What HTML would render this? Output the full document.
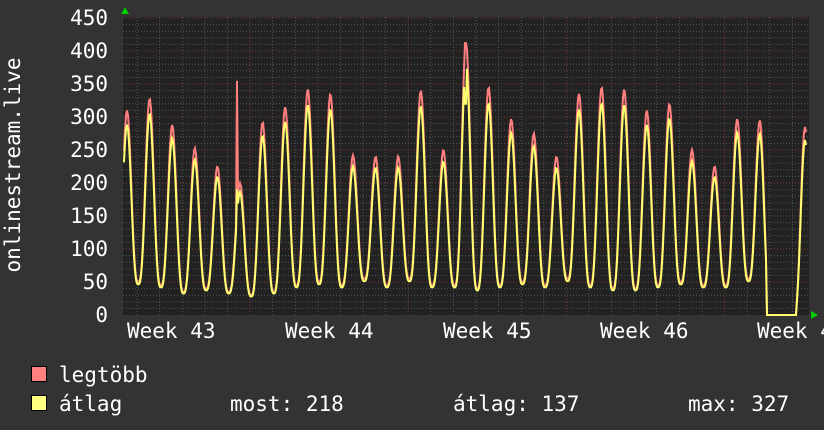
<!DOCTYPE html>
<html><head><meta charset="utf-8"><style>
html,body{margin:0;padding:0;background:#333;}
svg{display:block}
text{font-family:"DejaVu Sans Mono","Liberation Mono",monospace;fill:#fff;font-size:21px}
</style></head><body>
<svg id="s" width="824" height="430" xmlns="http://www.w3.org/2000/svg">
<rect width="824" height="430" fill="#333"/>
<rect x="123" y="17" width="686" height="298" fill="#222"/>
<g id="grid"></g>
<polyline id="red" fill="none" stroke="#ff7f7f" stroke-width="2" points=""/>
<polyline id="yel" fill="none" stroke="#ffff70" stroke-width="2" points=""/>
<polygon points="121,14 129,14 125,7" fill="#0c0"/>
<polygon points="811,311 811,319 818,315" fill="#0c0"/>
<g text-anchor="end">
<text x="108" y="25">450</text><text x="108" y="58">400</text><text x="108" y="91">350</text>
<text x="108" y="124">300</text><text x="108" y="157">250</text><text x="108" y="190">200</text>
<text x="108" y="223">150</text><text x="108" y="256">100</text><text x="108" y="289">50</text>
<text x="108" y="322">0</text>
</g>
<text transform="translate(20,165) rotate(-90)" text-anchor="middle">onlinestream.live</text>
<text x="127" y="338">Week 43</text><text x="285" y="338">Week 44</text><text x="443" y="338">Week 45</text>
<text x="600" y="338">Week 46</text><text x="757" y="338">Week 4</text>
<rect x="31.5" y="366.5" width="15" height="15" fill="#ff8080" stroke="#000"/>
<rect x="31.5" y="395.5" width="15" height="15" fill="#ffff80" stroke="#000"/>
<text x="59" y="382">legtöbb</text>
<text x="59" y="411">átlag</text>
<text x="230" y="411">most: 218</text>
<text x="453" y="411">átlag: 137</text>
<text x="688" y="411">max: 327</text>
</svg>
<script>
var g=document.getElementById('grid'),h='';
for(var v=10;v<=450;v+=10){var y=315-v*0.66;var maj=v%50==0;
h+='<line x1="123" x2="809" y1="'+y+'" y2="'+y+'" stroke="'+(maj?'#7a3a3a':'#555')+'" stroke-dasharray="1,2" stroke-width="1"/>';}
for(var k=-6;k<30;k++){var x=250+k*22.6;if(x<124||x>808)continue;var maj=((k%7)+7)%7==0;
h+='<line y1="17" y2="315" x1="'+x+'" x2="'+x+'" stroke="'+(maj?'#7a3a3a':'#555')+'" stroke-dasharray="1,2"/>';}
g.innerHTML=h;
var peaks=[310,328,288,253,225,200,292,315,342,335,242,240,240,340,250,412,345,297,275,240,335,345,342,310,320,250,225,297,295,0,285];
var troughs=[50,45,35,40,35,30,35,45,50,45,55,45,55,45,45,40,45,50,45,55,45,40,40,45,50,45,45,55,10,0,0];
var R=[],Y=[];
for(var x=124;x<=806;x++){
  var t=(x-127)/22.6;var i=Math.floor(t);var f=t-i;
  var p0=peaks[Math.max(0,Math.min(i,30))],p1=peaks[Math.max(0,Math.min(i+1,30))];
  var tr=troughs[Math.max(0,Math.min(i,30))];
  var c=(Math.cos(f*2*Math.PI)+1)/2;
  var pk=f<0.5?p0:p1;
  var v=tr+(pk-tr)*Math.pow(c,1.5);
  if(x>=767&&x<=796)v=0;
  if(Math.abs(x-237)<1)v=355;
  if(Math.abs(x-465)<1)v=412;
  R.push(x+','+(315-v*0.66).toFixed(1));
  var yv=v*0.93;if(v==412)yv=320;if(v==355)yv=190;
  Y.push(x+','+(315-yv*0.66).toFixed(1));
}
document.getElementById('red').setAttribute('points',R.join(' '));
document.getElementById('yel').setAttribute('points',Y.join(' '));
</script>
</body></html>
